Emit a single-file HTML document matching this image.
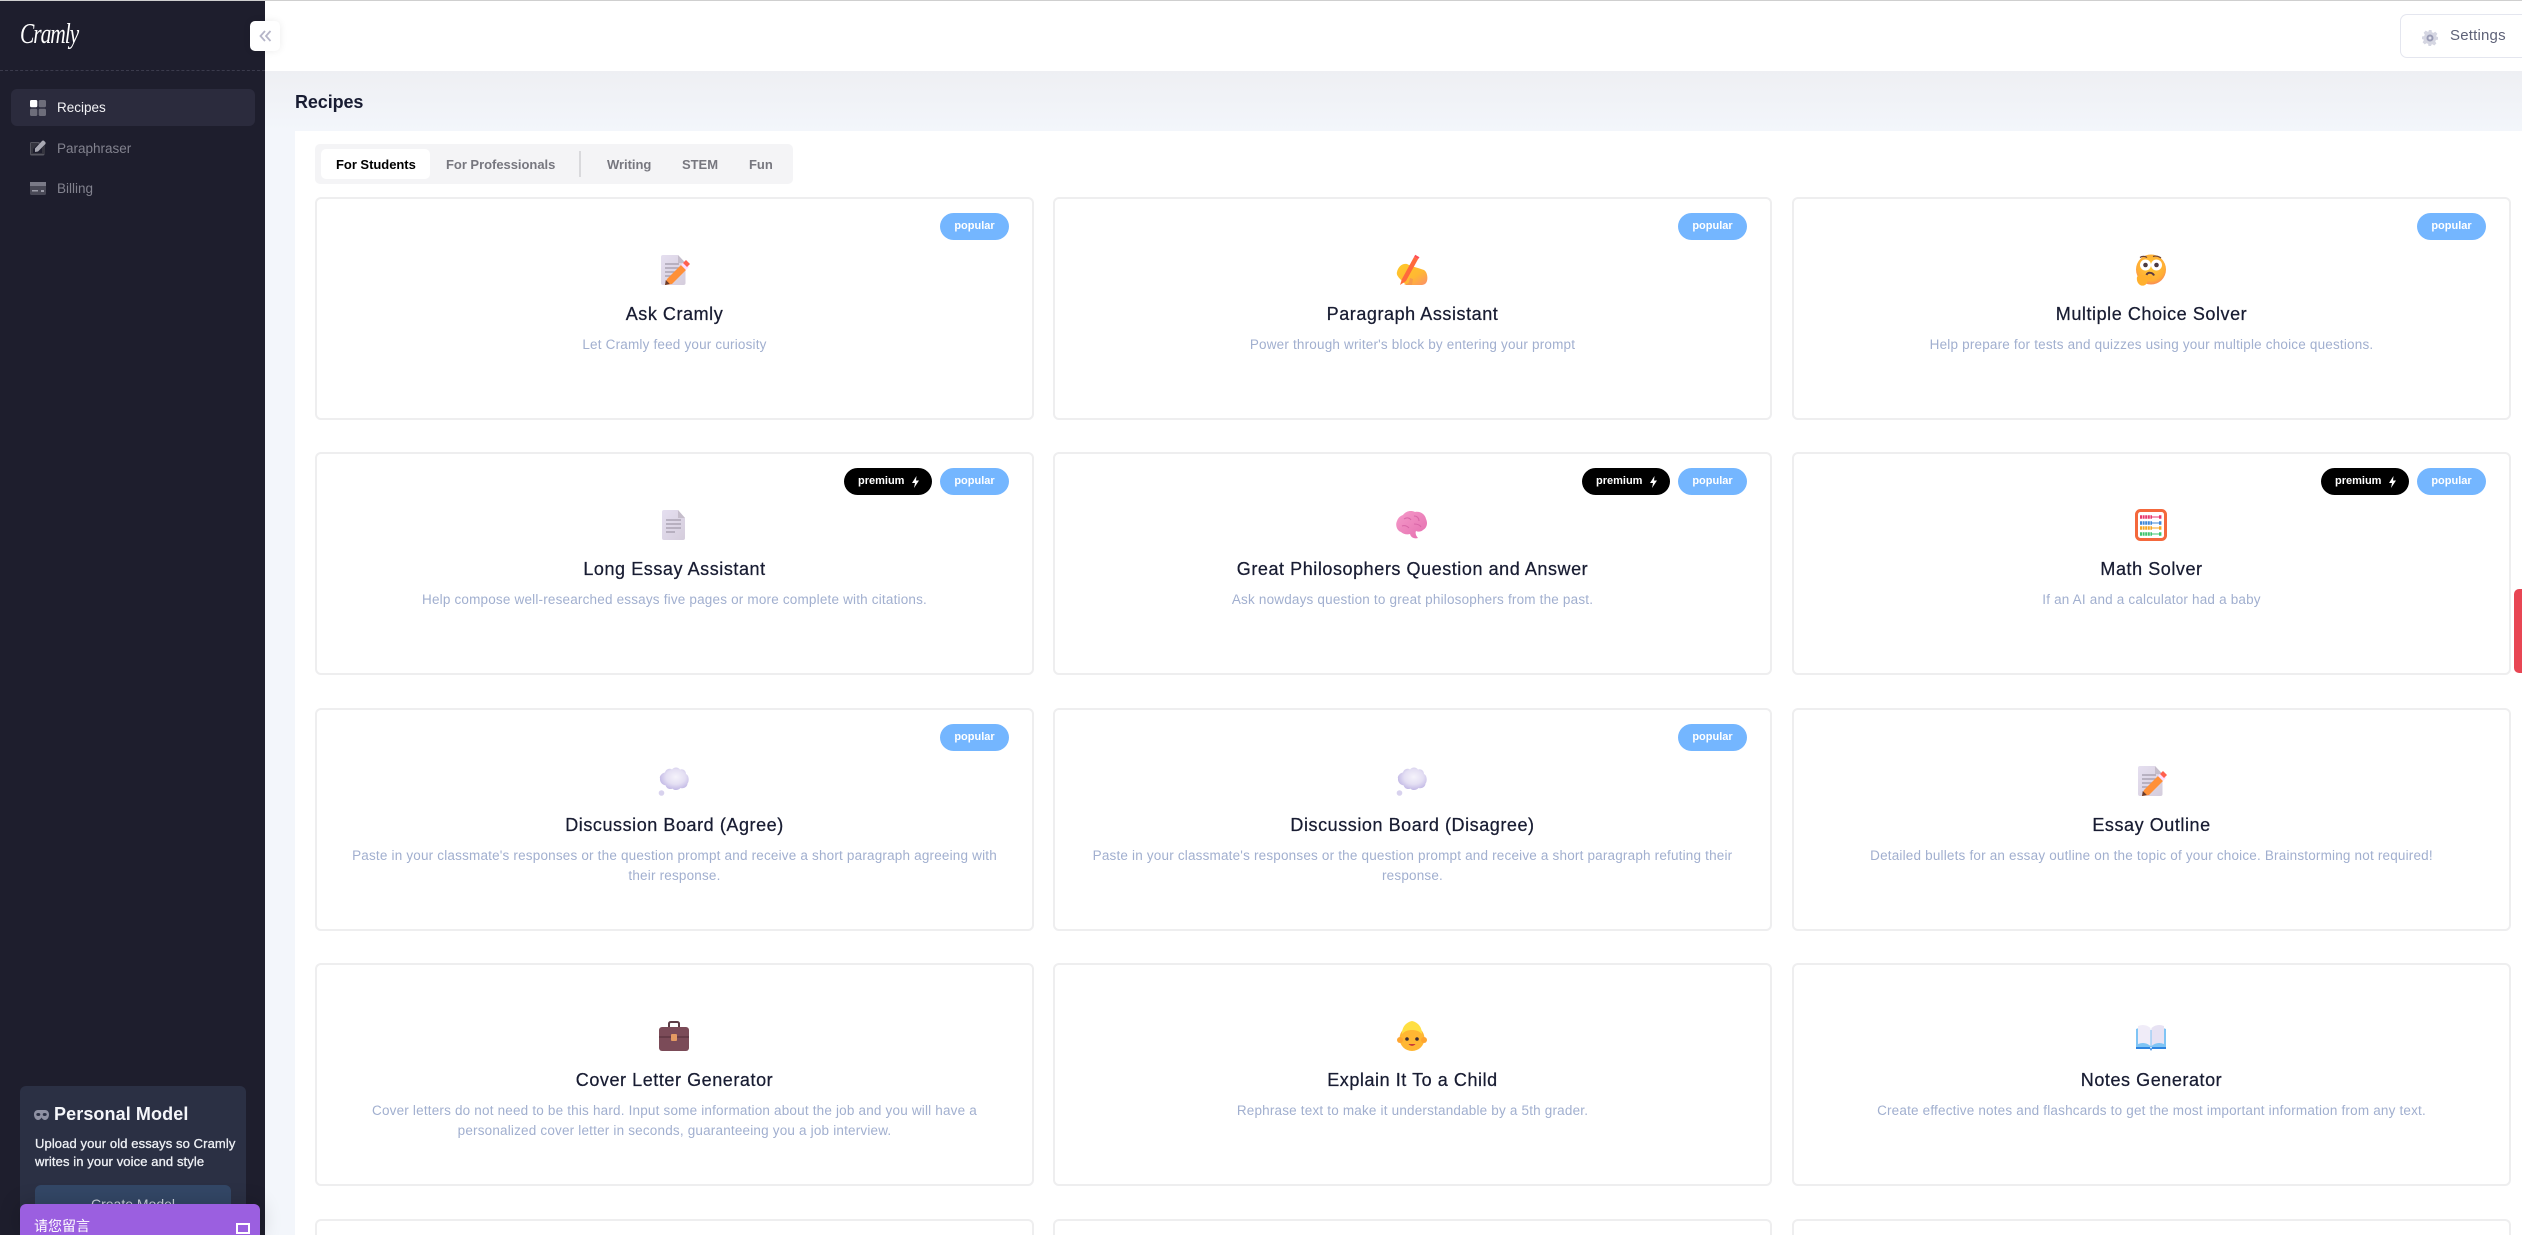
<!DOCTYPE html>
<html lang="en">
<head>
<meta charset="utf-8">
<title>Cramly Recipes</title>
<style>
*{box-sizing:border-box}
html,body{margin:0;padding:0;width:2522px;height:1235px;overflow:hidden;background:#fff;font-family:"Liberation Sans","Noto Sans CJK SC",sans-serif}
#wrap{position:relative;width:2522px;height:1235px;overflow:hidden}
.abs{position:absolute}
#topline{left:0;top:0;width:2522px;height:1px;background:#cfcfcf;z-index:20}
#side{left:0;top:0;width:265px;height:1235px;background:#1e1e2d;z-index:5;overflow:hidden}
#dash{left:0;top:70px;width:265px;border-top:1px dashed #3b3b4c}
#logo{left:20px;top:16px;font:italic 400 29px/36px "Liberation Serif",serif;color:#fff;letter-spacing:-1.4px;transform:scaleX(.74);transform-origin:left center}
#coll{left:250px;top:21px;width:30px;height:30px;background:#fff;border-radius:5px;box-shadow:0 0 8px rgba(0,0,0,.08);z-index:8}
.nav{font-size:13.5px;line-height:20px;left:57px;letter-spacing:0}
#act{left:11px;top:89px;width:244px;height:37px;background:#2b2b3d;border-radius:6px}
#head{left:265px;top:0;width:2257px;height:71px;background:#fff}
#bg{left:265px;top:71px;width:2257px;height:1164px;background:linear-gradient(#eeeff3 0,#f3f6fb 60px,#f3f6fb 100%)}
#title{left:295px;top:91px;font-size:18px;line-height:22px;font-weight:700;color:#181c32;letter-spacing:-.1px}
#panel{left:295px;top:131px;width:2227px;height:1104px;background:#fff}
#set{left:2400px;top:14px;width:122px;height:44px;border:1px solid #e4e6ef;border-right:0;border-radius:7px 0 0 7px;background:#fff}
#settxt{left:2450px;top:26px;font-size:15px;line-height:20px;color:#5e6278;letter-spacing:.2px}
#tabs{left:315px;top:144px;width:478px;height:40px;background:#f4f4f6;border-radius:5px}
#tact{left:321px;top:149px;width:109px;height:30px;background:#fff;border-radius:5px}
.tab{top:155px;font-size:13px;line-height:20px;font-weight:700;color:#77777f;white-space:nowrap;letter-spacing:-.03px}
#tdiv{left:579px;top:151px;width:2px;height:26px;background:#d9d9dc}
.card{position:absolute;width:719px;height:223px;background:#fff;border:2px solid #eeeeef;border-radius:6px;text-align:center}
.card.last{height:16px;border-bottom:0;border-radius:6px 6px 0 0}
.card svg{position:absolute;left:341px;top:55px;width:32px;height:32px}
.t{position:absolute;left:0;right:0;top:102.500px;font-size:18px;line-height:24px;font-weight:400;color:#181c32;letter-spacing:.56px;-webkit-text-stroke:.25px #181c32;white-space:nowrap}
.d{position:absolute;left:0;right:0;top:136px;font-size:13.5px;line-height:19.5px;color:#a1afcf;letter-spacing:.19px;white-space:nowrap}
.pop,.pre{position:absolute;top:14px;height:27px;border-radius:13.5px;color:#fff;font-size:11px;line-height:27px;font-weight:700;text-align:center}
.pop{right:23px;width:69px;background:#74b6ff}
.pre{right:100px;width:88px;background:#000;text-align:left;padding-left:14px}
.pre svg{left:67px;top:8px;width:9px;height:12px}
#pm{left:20px;top:1086px;width:226px;height:149px;background:#2b3044;border-radius:6px 6px 0 0}
#pmt{left:54px;top:1102px;font-size:18px;line-height:24px;font-weight:700;color:#f5f6fa;letter-spacing:.1px}
.pmd{left:35px;font-size:13px;line-height:19px;font-weight:400;-webkit-text-stroke:.3px #eef0f5;color:#eef0f5;white-space:nowrap;letter-spacing:.1px}
#pmb{left:35px;top:1185px;width:196px;height:40px;background:#334766;border-radius:6px;color:#ced4df;font-size:14px;line-height:38px;text-align:center}
#chat{left:20px;top:1204px;width:240px;height:31px;background:#9b5fe0;border-radius:6px 6px 0 0;box-shadow:0 0 22px rgba(0,0,0,.2);z-index:9}
#chatt{left:14px;top:13px;font-size:14px;line-height:18px;color:#fff;white-space:nowrap}
#chats{left:216px;top:19px;width:14px;height:11px;border:2.5px solid #fff}
#red{left:2514px;top:589px;width:8px;height:84px;background:#e84654;border-radius:5px 0 0 5px}
</style>
</head>
<body>
<div id="wrap">
<svg width="0" height="0" style="position:absolute">
<defs>
<linearGradient id="gp" x1="0" y1="0" x2="1" y2="1"><stop offset="0" stop-color="#e5dff0"/><stop offset="1" stop-color="#d5cddc"/></linearGradient>
<linearGradient id="gh" x1="0" y1="0" x2="1" y2="1"><stop offset="0" stop-color="#ffc928"/><stop offset=".6" stop-color="#ffb833"/><stop offset="1" stop-color="#fb8f6c"/></linearGradient>
<radialGradient id="gf" cx=".5" cy=".42" r=".65"><stop offset="0" stop-color="#ffca38"/><stop offset=".7" stop-color="#ffae35"/><stop offset="1" stop-color="#f6786b"/></radialGradient>
<radialGradient id="gc" cx=".55" cy=".42" r=".6"><stop offset="0" stop-color="#f5f3fb"/><stop offset=".55" stop-color="#e4dff3"/><stop offset="1" stop-color="#bfb5e4"/></radialGradient>
<linearGradient id="gb" x1="0" y1="0" x2="1" y2="1"><stop offset="0" stop-color="#f59ac9"/><stop offset="1" stop-color="#e56fb0"/></linearGradient>
<symbol id="memo" viewBox="0 0 32 32">
<path d="M5 1h15l7.500 8v20a2 2 0 0 1-2 2H5a2 2 0 0 1-2-2V3a2 2 0 0 1 2-2z" fill="url(#gp)"/>
<path d="M20 1l7.500 8H20z" fill="#c5bdcb"/>
<path d="M7 10h14M7 14h14M7 18h12M7 22h7" stroke="#aba4b4" stroke-width="1.500"/>
<path d="M9 25l14-14 5 5-14 14-7 1z" fill="#ff9038"/>
<path d="M23 11l3-3 5 5-3 3z" fill="#fdf"/>
<path d="M25 9l3-3 4 4-3 3z" fill="#ff5f4e"/>
<path d="M7 31l.800-5 4 4z" fill="#6b3b2a"/>
</symbol>
<symbol id="write" viewBox="0 0 32 32">
<path d="M1 18c1-5 5-9 10-8l4 2 7 2 6 2c3 2 4 7 3 11-1 3-3 4-6 4H14c-4 0-7-2-9-5-2-2-5-5-4-8z" fill="url(#gh)"/>
<path d="M4 31l2-6L18 3l4 2.200L10 27z" fill="#ff6a3c"/>
<path d="M18 3l1.200-2.200 4.300 2.400L22 5.200z" fill="#ff4f55"/>
<path d="M8 31c2-1 4-1 5-3l1-4 3 1-1 6z" fill="#f79a4c"/>
</symbol>
<symbol id="think" viewBox="0 0 32 32">
<circle cx="16" cy="15.500" r="15" fill="url(#gf)"/>
<circle cx="10.500" cy="11" r="5.500" fill="#fff"/><circle cx="21.500" cy="11" r="5.500" fill="#fff"/>
<circle cx="10.500" cy="11" r="2.300" fill="#4b3a42"/><circle cx="21.500" cy="11" r="2.300" fill="#4b3a42"/>
<path d="M5 3.500c2-1.500 5-1.500 7 0M18 2.500c3-1 6 0 8 1.500" stroke="#6d4335" stroke-width="1.200" fill="none"/>
<path d="M11.500 21c1-3 6-3 7.500.5" stroke="#5a3a40" stroke-width="2" fill="none"/>
<path d="M2 23c2-3 5-2 6-2l8 1c2 1 2 3 0 3l-4 .500c1 2 0 5-3 6-4 1-8-3-7-8.500z" fill="#ffb02e"/>
</symbol>
<symbol id="doc" viewBox="0 0 32 32">
<path d="M6 1h14l7 8v20a2 2 0 0 1-2 2H6a2 2 0 0 1-2-2V3a2 2 0 0 1 2-2z" fill="url(#gp)"/>
<path d="M20 1l7 8h-7z" fill="#c5bdcb"/>
<path d="M8 11h15M8 15h15M8 19h15M8 23h9" stroke="#aba4b4" stroke-width="1.500"/>
</symbol>
<symbol id="brain" viewBox="0 0 32 32">
<path d="M7 6c3-4 8-5 12-3 5-1 10 2 11 7 2 4 1 9-3 11-2 2-5 2-7 1-1 2 0 5 2 7-3 1-7 0-8-4-3 1-7 0-9-2C1 22-1 16 1 12c1-3 3-5 6-6z" fill="url(#gb)"/>
<path d="M8 10c3-2 6-1 7 1M18 7c3 0 5 2 5 5M6 17c3-1 5 0 7 2M18 15c3 0 6 1 7 3" stroke="#d766a6" stroke-width="1" fill="none"/>
</symbol>
<symbol id="abacus" viewBox="0 0 32 32">
<rect x="1.500" y="1.500" width="29" height="29" rx="4" fill="#fff" stroke="#f4683c" stroke-width="3"/>
<g stroke-width="3.600" stroke-dasharray="2 .6"><path d="M5 8h12M24 8h3" stroke="#e8386e"/><path d="M5 14h12M24 14h3" stroke="#3f87d6"/><path d="M5 19h12M24 19h3" stroke="#f5a623"/><path d="M5 25h12M24 25h3" stroke="#3fc46e"/></g>
<path d="M17 8h7" stroke="#e8386e"/><path d="M17 14h7" stroke="#3f87d6"/><path d="M17 19h7" stroke="#f5a623"/><path d="M17 25h7" stroke="#3fc46e"/>
</symbol>
<symbol id="cloud" viewBox="0 0 32 32">
<path transform="translate(0 -.5) scale(1 1.120)" d="M7 7c1-3 5-4 7-2.500 2-2.500 6-2.500 8 0 3-1 6 1 6 4 3 1 3.500 6.500 1.500 8.500 0 3-4 5-7 4-2 2-6 2.500-8 .5-3 1-6 0-7-3-3 0-6-3-5.500-6C1 10.500 4 7.500 7 7z" fill="url(#gc)"/>
<circle cx="3.500" cy="28" r="2.800" fill="#d8d2ee"/>
</symbol>
<symbol id="brief" viewBox="0 0 32 32">
<path d="M11 7V3.500C11 2.500 12 2 13 2h6c1 0 2 .500 2 1.500V7" fill="none" stroke="#5d3d46" stroke-width="2"/>
<rect x="1" y="7" width="30" height="24" rx="3" fill="#7b4b58"/>
<rect x="1" y="16" width="30" height="2" fill="#653b47"/>
<rect x="13" y="14" width="6" height="7" rx="1" fill="#e49a63"/>
</symbol>
<symbol id="baby" viewBox="0 0 32 32">
<circle cx="16" cy="18.500" r="12.500" fill="#ffb733"/>
<circle cx="4" cy="20" r="3" fill="#ffa52f"/><circle cx="28" cy="20" r="3" fill="#ffa52f"/>
<path d="M6 14C6 6 11 2 16 1c5 1 10 5 10 13-3-3-6-4-10-4s-7 1-10 4z" fill="#ffdf42"/>
<circle cx="11" cy="19" r="1.800" fill="#3d2c33"/><circle cx="21" cy="19" r="1.800" fill="#3d2c33"/>
<path d="M12.500 24c2 2.500 5 2.500 7 0z" fill="#c83a3a"/>
</symbol>
<symbol id="book" viewBox="0 0 32 32">
<path d="M1 9c5-2 10-2 15 1 5-3 10-3 15-1v18H1z" fill="#7fc4f5"/>
<path d="M1 27h14l1 2 1-2h14v2H17l-1 2-1-2H1z" fill="#2f84e0"/>
<path d="M3 6c5-2 9-1 12.500 2v18C12 23 8 22 3 24z" fill="#f0ecf8"/>
<path d="M29 6c-5-2-9-1-12.500 2v18C20 23 24 22 29 24z" fill="#e7e2f3"/>
</symbol>
<symbol id="bolt" viewBox="0 0 9 12"><path d="M5.500 0L1 7h3L3 12l5-7.500H5z" fill="#fff"/></symbol>
</defs>
</svg>

<div class="abs" id="topline"></div>
<div class="abs" id="bg"></div>
<div class="abs" id="head"></div>
<div class="abs" id="set"></div>
<svg class="abs" style="left:2422px;top:30px" width="16" height="16" viewBox="0 0 16 16"><path d="M6.500 0h3l.4 2.200 1.500.7 1.900-1.200 2.100 2.100-1.200 1.900.7 1.500L16 6.600v3l-2.100.4-.7 1.500 1.200 1.900-2.100 2.100-1.900-1.200-1.500.7L9.500 16h-3l-.4-2.100-1.500-.7-1.900 1.200-2.100-2.100 1.200-1.900-.7-1.500L0 9.500v-3l2.100-.4.700-1.500L1.600 2.700 3.700.6l1.900 1.200 1.500-.7z" fill="#d5d6e2"/><circle cx="8" cy="8" r="3.500" fill="#9a9cb6"/><circle cx="8" cy="8" r="1.500" fill="#e2e3ec"/></svg>
<div class="abs" id="settxt">Settings</div>

<div class="abs" id="title">Recipes</div>
<div class="abs" id="panel"></div>
<div class="abs" id="tabs"></div>
<div class="abs" id="tact"></div>
<div class="abs tab" style="left:336px;color:#000">For Students</div>
<div class="abs tab" style="left:446px">For Professionals</div>
<div class="abs" id="tdiv"></div>
<div class="abs tab" style="left:607px">Writing</div>
<div class="abs tab" style="left:682px">STEM</div>
<div class="abs tab" style="left:749px">Fun</div>

<div class="card" style="left:315px;top:197px"><span class="pop">popular</span><svg><use href="#memo"/></svg><div class="t">Ask Cramly</div><div class="d">Let Cramly feed your curiosity</div></div>
<div class="card" style="left:1053px;top:197px"><span class="pop">popular</span><svg><use href="#write"/></svg><div class="t">Paragraph Assistant</div><div class="d">Power through writer's block by entering your prompt</div></div>
<div class="card" style="left:1792px;top:197px"><span class="pop">popular</span><svg><use href="#think"/></svg><div class="t">Multiple Choice Solver</div><div class="d">Help prepare for tests and quizzes using your multiple choice questions.</div></div>

<div class="card" style="left:315px;top:452px"><span class="pre">premium<svg><use href="#bolt"/></svg></span><span class="pop">popular</span><svg><use href="#doc"/></svg><div class="t">Long Essay Assistant</div><div class="d">Help compose well-researched essays five pages or more complete with citations.</div></div>
<div class="card" style="left:1053px;top:452px"><span class="pre">premium<svg><use href="#bolt"/></svg></span><span class="pop">popular</span><svg><use href="#brain"/></svg><div class="t">Great Philosophers Question and Answer</div><div class="d">Ask nowdays question to great philosophers from the past.</div></div>
<div class="card" style="left:1792px;top:452px"><span class="pre">premium<svg><use href="#bolt"/></svg></span><span class="pop">popular</span><svg><use href="#abacus"/></svg><div class="t">Math Solver</div><div class="d">If an AI and a calculator had a baby</div></div>

<div class="card" style="left:315px;top:708px"><span class="pop">popular</span><svg><use href="#cloud"/></svg><div class="t">Discussion Board (Agree)</div><div class="d">Paste in your classmate's responses or the question prompt and receive a short paragraph agreeing with<br>their response.</div></div>
<div class="card" style="left:1053px;top:708px"><span class="pop">popular</span><svg><use href="#cloud"/></svg><div class="t">Discussion Board (Disagree)</div><div class="d">Paste in your classmate's responses or the question prompt and receive a short paragraph refuting their<br>response.</div></div>
<div class="card" style="left:1792px;top:708px"><svg><use href="#memo"/></svg><div class="t">Essay Outline</div><div class="d">Detailed bullets for an essay outline on the topic of your choice. Brainstorming not required!</div></div>

<div class="card" style="left:315px;top:963px"><svg><use href="#brief"/></svg><div class="t">Cover Letter Generator</div><div class="d">Cover letters do not need to be this hard. Input some information about the job and you will have a<br>personalized cover letter in seconds, guaranteeing you a job interview.</div></div>
<div class="card" style="left:1053px;top:963px"><svg><use href="#baby"/></svg><div class="t">Explain It To a Child</div><div class="d">Rephrase text to make it understandable by a 5th grader.</div></div>
<div class="card" style="left:1792px;top:963px"><svg><use href="#book"/></svg><div class="t">Notes Generator</div><div class="d">Create effective notes and flashcards to get the most important information from any text.</div></div>

<div class="card last" style="left:315px;top:1219px"></div>
<div class="card last" style="left:1053px;top:1219px"></div>
<div class="card last" style="left:1792px;top:1219px"></div>

<div class="abs" id="red"></div>

<div class="abs" id="side">
  <div class="abs" id="logo">Cramly</div>
  <div class="abs" id="dash"></div>
  <div class="abs" id="act"></div>
  <svg class="abs" style="left:30px;top:100px" width="16" height="16" viewBox="0 0 16 16"><rect width="7.300" height="7.300" rx="1.500" fill="#fff"/><rect x="8.700" width="7.300" height="7.300" rx="1.500" fill="#6d6d7a"/><rect y="8.700" width="7.300" height="7.300" rx="1.500" fill="#6d6d7a"/><rect x="8.700" y="8.700" width="7.300" height="7.300" rx="1.500" fill="#6d6d7a"/></svg>
  <div class="abs nav" style="top:98px;color:#f2f2f5">Recipes</div>
  <svg class="abs" style="left:30px;top:140px" width="16" height="16" viewBox="0 0 16 16"><path d="M1.500 2h8v2H3v9.500h9.500V8h2v6a1.500 1.500 0 0 1-1.500 1.500H1.500A1.500 1.500 0 0 1 0 14V3.500A1.500 1.500 0 0 1 1.500 2z" fill="#55555f"/><path d="M1 3h8L3 9v4h9V8l3-3v9H1z" fill="#35353f"/><path d="M5 8.500l7-7.500c.7-.6 1.500-.6 2.200 0l1 1c.6.700.6 1.500 0 2.200L8 11.500l-3 .5z" fill="#a9a9b3"/></svg>
  <div class="abs nav" style="top:139px;color:#82828e">Paraphraser</div>
  <svg class="abs" style="left:30px;top:182px" width="16" height="13" viewBox="0 0 16 13"><rect width="16" height="13" rx="1.500" fill="#494956"/><rect y="0" width="16" height="4" fill="#7a7a87"/><rect x="2" y="8" width="6" height="1.500" fill="#9a9aa6"/><rect x="11" y="8" width="3" height="2" fill="#9a9aa6"/></svg>
  <div class="abs nav" style="top:179px;color:#82828e">Billing</div>

  <div class="abs" id="pm"></div>
  <svg class="abs" style="left:34px;top:1110px" width="15" height="10" viewBox="0 0 15 10"><path d="M4 0h7c2.500 0 4 2 4 4.500S13.500 10 11 10c-1.500 0-2.500-.8-3.500-2.500C6.500 9.200 5.500 10 4 10 1.500 10 0 7 0 4.500S1.500 0 4 0z" fill="#8f91a3"/><ellipse cx="4.300" cy="4.500" rx="2" ry="1.500" fill="#2b3044"/><ellipse cx="10.700" cy="4.500" rx="2" ry="1.500" fill="#2b3044"/></svg>
  <div class="abs" id="pmt">Personal Model</div>
  <div class="abs pmd" style="top:1134px">Upload your old essays so Cramly</div>
  <div class="abs pmd" style="top:1152px">writes in your voice and style</div>
  <div class="abs" id="pmb">Create Model</div>
</div>

<div class="abs" id="coll"><svg class="abs" style="left:9px;top:9px" width="13" height="12" viewBox="0 0 13 12"><path d="M6 1L1.500 6 6 11M11.500 1L7 6l4.500 5" fill="none" stroke="#b5b5c8" stroke-width="1.800"/></svg></div>
<div class="abs" id="chat"><div class="abs" id="chatt">请您留言</div><div class="abs" id="chats"></div></div>
</div>
</body>
</html>
